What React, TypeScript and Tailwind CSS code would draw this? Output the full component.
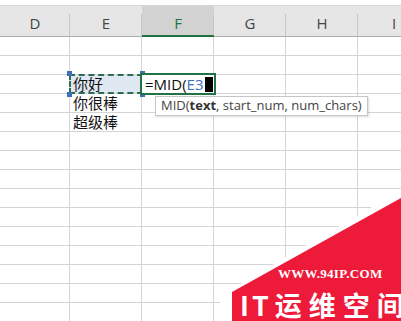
import React from 'react';

const cols = [
  { name: 'D', w: 'w-[70px]' },
  { name: 'E', w: 'w-[72px]' },
  { name: 'F', w: 'w-[72px]', active: true },
  { name: 'G', w: 'w-[72px]' },
  { name: 'H', w: 'w-[72px]' },
  { name: 'I', w: 'w-[72px]' },
];

const cellText: Record<string, string> = {
  E4: '你很棒',
  E5: '超级棒',
};

const rows = Array.from({ length: 15 }, (_, i) => i + 1);

function Handle({ pos }: { pos: string }) {
  return <span className={`absolute w-[5px] h-[5px] bg-[#3d6fb6] ${pos}`} />;
}

function Cell({ id, w }: { id: string; w: string }) {
  // copied range with marching ants
  if (id === 'E3') {
    return (
      <div className={`${w} shrink-0 relative z-10 bg-[#dfe7f1] outline-2 outline-dashed outline-[#2c6b58] -outline-offset-1 flex items-center pl-[3px] text-[15px] leading-none text-[#111]`}>
        你好
        <Handle pos="left-[-3px] top-[-4px]" />
        <Handle pos="right-[-3px] top-[-4px]" />
        <Handle pos="left-[-3px] bottom-[-4px]" />
        <Handle pos="right-[-3px] bottom-[-4px]" />
      </div>
    );
  }
  // cell being edited
  if (id === 'F3') {
    return (
      <div className={`${w} shrink-0 relative z-10 bg-white outline-2 outline-[#217346] flex items-center pl-[3px] text-[15px] leading-none text-[#111]`}>
        <span>=MID(</span>
        <span className="text-[#3b6ec4]">E3</span>
        <span className="ml-[1px] w-[8px] h-[15px] bg-black" />
      </div>
    );
  }
  return (
    <div className={`${w} shrink-0 border-r border-[#d4d4d4] flex items-center pl-[3px] text-[15px] leading-none text-[#111]`}>
      {cellText[id] ?? ''}
    </div>
  );
}

export default function App() {
  return (
    <div
      className="relative w-[401px] h-[321px] overflow-hidden bg-white"
      style={{ fontFamily: "'Open Sans', 'Noto Sans CJK SC', sans-serif" }}
    >
      <div className="h-[6px] bg-white border-b border-[#d6d6d6]" />

      {/* column headers */}
      <div className="flex h-[31px] bg-[#e6e6e6] border-b border-[#ababab]">
        {cols.map((c) => (
          <div
            key={c.name}
            className={`${c.w} shrink-0 relative flex items-end justify-center pb-[2px] text-[15px] ${
              c.active ? 'bg-[#d2d2d2] text-[#217346]' : 'text-[#444]'
            }`}
          >
            {c.name}
            <span className="absolute right-0 top-[8px] bottom-0 w-px bg-[#c8c8c8]" />
            {c.active && <span className="absolute left-0 right-0 bottom-[-1px] h-[2px] bg-[#217346]" />}
          </div>
        ))}
      </div>

      {/* grid */}
      {rows.map((r) => (
        <div key={r} className="relative flex h-[19px] border-b border-[#d4d4d4]">
          {cols.map((c) => (
            <Cell key={c.name} id={c.name + r} w={c.w} />
          ))}
          {r === 3 && (
            <div className="absolute left-[155px] top-[21px] z-20 h-[20px] px-[5px] flex items-center bg-white border border-[#c6c6c6] shadow-[1px_1px_2px_rgba(0,0,0,0.15)] text-[13px] text-[#444] whitespace-nowrap">
              MID(<b className="font-bold text-[#333]">text</b>, start_num, num_chars)
            </div>
          )}
        </div>
      ))}

      {/* watermark */}
      <div className="absolute right-0 bottom-0 w-[181px] h-[131px] z-30 flex flex-col justify-end overflow-hidden">
        <svg className="absolute inset-0" width="181" height="131" viewBox="0 0 181 131">
          <polygon points="181,0 181,131 0,131 0,106" fill="#ffffff" />
          <polygon points="181,8 181,131 12,131 12,102" fill="#ee1a3a" />
        </svg>
        <div
          className="relative ml-[58px] text-[13px] leading-[16px] font-bold text-white tracking-[0.3px]"
          style={{ fontFamily: "'Liberation Serif', 'DejaVu Serif', serif" }}
        >
          WWW.94IP.COM
        </div>
        <div
          className="relative mt-[6px] ml-[20px] text-[27px] leading-[33px] font-bold text-white tracking-[7px] whitespace-nowrap"
          style={{ fontFamily: "'Noto Sans CJK SC', sans-serif" }}
        >
          <span className="tracking-[3px]">IT</span>
          <span className="ml-[3px]">运维空间</span>
        </div>
      </div>
    </div>
  );
}
